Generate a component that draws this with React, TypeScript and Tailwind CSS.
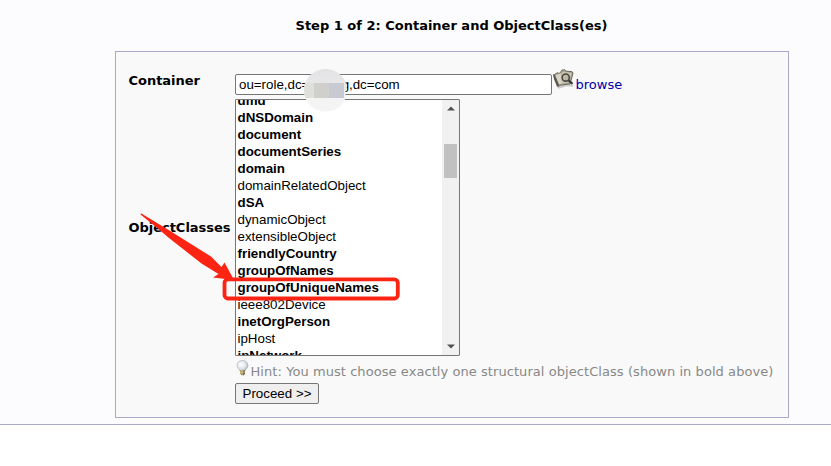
const OPTIONS: [string, boolean][] = [
  ["dmd", true],
  ["dNSDomain", true],
  ["document", true],
  ["documentSeries", true],
  ["domain", true],
  ["domainRelatedObject", false],
  ["dSA", true],
  ["dynamicObject", false],
  ["extensibleObject", false],
  ["friendlyCountry", true],
  ["groupOfNames", true],
  ["groupOfUniqueNames", true],
  ["ieee802Device", false],
  ["inetOrgPerson", true],
  ["ipHost", false],
  ["ipNetwork", true],
];

function BrowseIcon() {
  return (
    <svg className="-mt-[1px] block h-[24px] w-[23.5px] shrink-0" viewBox="0 0 24 24">
      <path d="M4 19.500 L16 17 L22 18 L21 20 L15 19.500 L7 22Z" fill="#000" opacity=".18" />
      <path d="M1 7.500 L3 7 L7 17 L7.500 20 L5 19.500 L2 12Z" fill="#55534a" />
      <path d="M2.500 7.500 L5.500 5.500 L7.500 6.500 L9 4.500 L10 3 L13 2.500 L14 4 L20.500 4.500 L21.500 6 L18.500 17 L7 18.500Z" fill="#aaa693" stroke="#6a675b" strokeWidth="1" />
      <path d="M3.500 8.500 L9 6 L11 16 L7.500 17.500Z" fill="#d9d5c6" />
      <path d="M10 5.500 L12.500 4.500 L20 6 L17.500 15.500 L9.500 16.500Z" fill="#cbc7b6" />
      <circle cx="14" cy="10.500" r="3.700" fill="#bbb8a6" stroke="#49473d" strokeWidth="1.600" />
      <path d="M17 13.500 L21 17" stroke="#35342e" strokeWidth="2.200" />
    </svg>
  );
}

function BulbIcon() {
  return (
    <svg className="block h-[16px] w-[16px] shrink-0" viewBox="0 0 16 16">
      <defs>
        <radialGradient id="glass" cx=".4" cy=".4" r=".6">
          <stop offset="0" stopColor="#fff" />
          <stop offset=".6" stopColor="#e4e8ee" />
          <stop offset="1" stopColor="#b5b9c0" />
        </radialGradient>
      </defs>
      <path d="M7.500 .5 C4.200 .5 2 2.700 2 5.400 C2 8 4.500 9 5 11 H10 C10.500 9 13 8 13 5.400 C13 2.700 10.800 .5 7.500 .5Z" fill="url(#glass)" stroke="#afb2b7" strokeWidth=".7" />
      <path d="M5 10.500 H10 V13.500 L8.700 15.300 H6.300 L5 13.500Z" fill="#b3a16a" />
      <path d="M8.500 10.500 H10 V13.500 L8.700 15.300 H8Z" fill="#6b5f42" />
      <path d="M5 12.200 H10" stroke="#e0d29c" strokeWidth=".7" />
    </svg>
  );
}

export default function App() {
  return (
    <div className="relative h-[466px] w-[831px] overflow-hidden bg-white font-['Verdana','DejaVu_Sans',sans-serif] text-[13px] leading-[16px] text-black">
      <main className="flex h-[425px] flex-col border-b border-[#aaaacc] bg-[#fcfcfe] pl-[115px]">
        <h1 className="mt-[18px] w-[673px] text-center font-bold">Step 1 of 2: Container and ObjectClass(es)</h1>
        <form className="mt-[17px] flex h-[367px] w-[674px] flex-col border border-[#aaaacc] bg-[#f9f9f9] pt-[16px] pl-[13px]">
          <div className="flex h-[31px]">
            <label className="-ml-[0.5px] mr-[0.5px] w-[106px] pt-[5px] font-bold tracking-[-0.03px]">Container</label>
            <div className="mt-[6px] h-[21px] w-[317px] rounded-[2px] border border-[#767676] bg-white pl-[3px] font-['Liberation_Sans',Arial,sans-serif] text-[13.333px] leading-[19px]">
              ou=role,dc=<span className="tracking-[-0.2px]">xxxxxg</span>,dc=com
            </div>
            <BrowseIcon />
            <a className="pt-[9px] text-[#0000aa]">browse</a>
          </div>
          <div className="flex h-[257px] items-center">
            <label className="-ml-[0.5px] mr-[0.5px] w-[106px] font-bold tracking-[-0.03px]">ObjectClasses</label>
            <div className="flex h-[257px] w-[225px] overflow-hidden rounded-[1px] border border-[#767676] bg-white font-['Liberation_Sans',Arial,sans-serif] text-[13.333px] leading-[17px]">
              <ul className="-mt-[8px] w-[206px] pl-[1.5px]">
                {OPTIONS.map(([name, bold]) => (
                  <li key={name} className={bold ? "h-[17px] font-bold" : "h-[17px]"}>
                    {name}
                  </li>
                ))}
              </ul>
              <div className="flex h-[255px] w-[17px] flex-col items-center bg-[#f1f1f1]">
                <svg className="mt-[6px] h-[5px] w-[8px]" viewBox="0 0 8 5">
                  <path d="M0 4.500 L4 .5 L8 4.500Z" fill="#505050" />
                </svg>
                <div className="mt-[33px] h-[34px] w-[13px] bg-[#c1c1c1]" />
                <svg className="mt-auto mb-[6px] h-[5px] w-[8px]" viewBox="0 0 8 5">
                  <path d="M0 .5 L4 4.500 L8 .5Z" fill="#505050" />
                </svg>
              </div>
            </div>
          </div>
          <div className="mt-[4px] ml-[106px] flex h-[22px] text-[#888888]">
            <BulbIcon />
            <span className="-ml-[0.5px] whitespace-nowrap pt-[4px] tracking-[0.065px]">
              Hint: You must choose exactly one structural objectClass (shown in bold above)
            </span>
          </div>
          <button type="button" className="mt-[1px] ml-[106px] h-[21px] w-[84px] rounded-[2px] border border-[#767676] bg-[#efefef] text-center font-['Liberation_Sans',Arial,sans-serif] text-[13.333px] leading-[19px]">
            Proceed &gt;&gt;
          </button>
        </form>
      </main>
      <svg className="absolute top-0 left-0 h-[466px] w-[831px]" viewBox="0 0 831 466">
        <defs>
          <linearGradient id="mask" x1="0" y1="0" x2="0" y2="1">
            <stop offset="0" stopColor="#e3e3e5" />
            <stop offset=".4" stopColor="#e8e8ea" />
            <stop offset=".7" stopColor="#f4f4f5" />
            <stop offset="1" stopColor="#f4f4f5" />
          </linearGradient>
        </defs>
        <path d="M325.500 69 C337 69 347 78 347 89 L345.500 91 V98 L345 99 C342 107 334 111.500 325.500 111.500 C313 111.500 304 102 304 90 C304 78 314 69 325.500 69Z" fill="url(#mask)" />
        <path d="M305 83 H314 V98 H305.500 Q303.500 91 305 83Z" fill="#dfdfdc" />
        <path d="M314 83 H329 V98 H314Z" fill="#d0cfcb" />
        <path d="M329 83 H344 V98 H329Z" fill="#c8cad1" />
        <path d="M141 213.300 L169 230.300 L211 256.500 L221.500 267 L224.500 262.500 L234 280 L213 277.500 L218.500 274 L201.500 263.500 L169 238 L156 227 L140.500 214.500Z" fill="#fd2414" />
        <rect x="224.500" y="279.300" width="173.300" height="19.200" rx="3.500" fill="none" stroke="#fd2414" strokeWidth="3.800" />
      </svg>
    </div>
  );
}
